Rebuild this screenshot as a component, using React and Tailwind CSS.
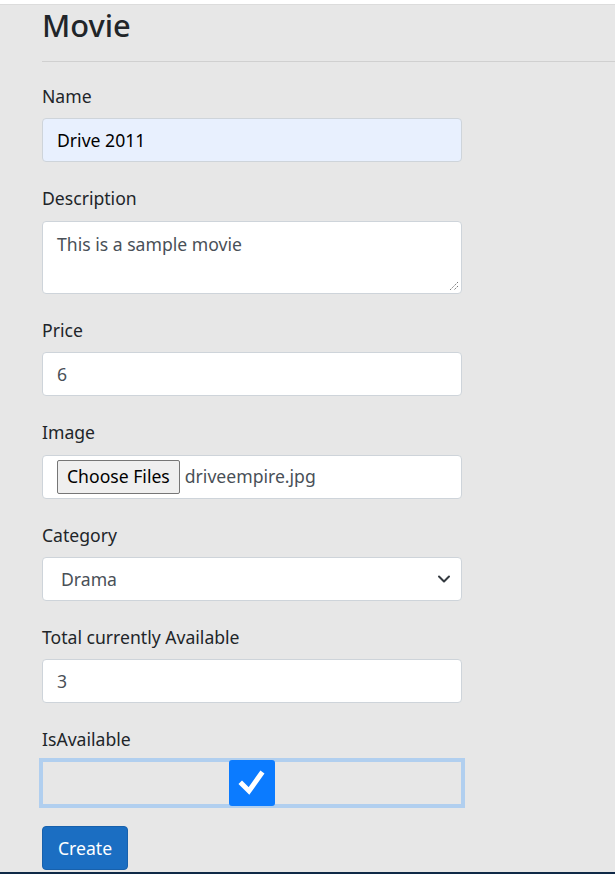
import React from 'react'

const labelCls = 'block text-[17.6px] leading-[26.4px] text-[#212529] mb-[9px]'
const inputCls =
  'w-full h-[44px] rounded-[4px] border border-[#ced4da] bg-white px-[14px] text-[17.6px] text-[#495057] flex items-center'

const Field = ({ label, children }) => (
  <div className="mb-[23px]">
    <label className={labelCls}>{label}</label>
    {children}
  </div>
)

export default function App() {
  return (
    <div className="min-h-[874px] bg-[#e7e7e7] flex flex-col" style={{ fontFamily: '"Noto Sans", "Open Sans", sans-serif' }}>
      <div className="h-[4px] bg-white border-b border-[#dcdcdc] box-content" />
      <div className="flex-1 pl-[42px]">
        <h1 className="text-[30.8px] leading-[37px] font-medium text-[#212529] mt-[2px]">Movie</h1>
        <hr className="mt-[17px] border-t border-[#d0d0d0]" />

        <form className="w-[420px] mt-[21px]">
          <Field label="Name">
            <div className={inputCls + ' !bg-[#e8f0fe] !text-[#000]'}>Drive 2011</div>
          </Field>

          <Field label="Description">
            <div className="relative w-full h-[73px] rounded-[4px] border border-[#ced4da] bg-white px-[14px] pt-[9px] text-[17.6px] text-[#495057]">
              This is a sample movie
              <svg className="absolute right-[2px] bottom-[2px]" width="12" height="12" viewBox="0 0 12 12">
                <path d="M11 3 L3 11 M11 7 L7 11" stroke="#777" strokeWidth="1" strokeDasharray="1.5 1" />
              </svg>
            </div>
          </Field>

          <Field label="Price">
            <div className={inputCls}>6</div>
          </Field>

          <Field label="Image">
            <div className={inputCls + ' gap-[5px]'}>
              <span className="h-[34px] px-[9px] flex items-center rounded-[2px] border border-[#767676] bg-[#efefef] text-[#000] text-[17.6px]">
                Choose Files
              </span>
              <span>driveempire.jpg</span>
            </div>
          </Field>

          <Field label="Category">
            <div className={inputCls + ' justify-between !pl-[18px] !pr-[10px]'}>
              <span>Drama</span>
              <svg width="14" height="10" viewBox="0 0 14 10">
                <path d="M2 2.5 L7 7.5 L12 2.5" fill="none" stroke="#343a40" strokeWidth="2" strokeLinecap="round" strokeLinejoin="round" />
              </svg>
            </div>
          </Field>

          <Field label="Total currently Available">
            <div className={inputCls}>3</div>
          </Field>

          <div className="mb-[18px]">
            <label className="block text-[17.6px] leading-[26.4px] text-[#212529]">IsAvailable</label>
            <div className="-ml-[3px] mt-[5px] w-[426px] h-[50px] border-[4px] border-[#b1cfef] flex items-center justify-center">
              <span className="w-[46px] h-[46px] rounded-[3px] bg-[#0b7bff] flex items-center justify-center">
                <svg width="30" height="30" viewBox="0 0 30 30">
                  <path d="M5 16 L12 23 L24 6" fill="none" stroke="#fff" strokeWidth="5" strokeLinecap="square" />
                </svg>
              </span>
            </div>
          </div>

          <button type="button" className="h-[44px] px-[15px] rounded-[4px] bg-[#1b6ec2] text-white text-[17.6px] border border-[#1861ac]">
            Create
          </button>
        </form>
      </div>
      <div className="h-[3px] bg-[#0f2947] mt-[2px]" />
    </div>
  )
}
